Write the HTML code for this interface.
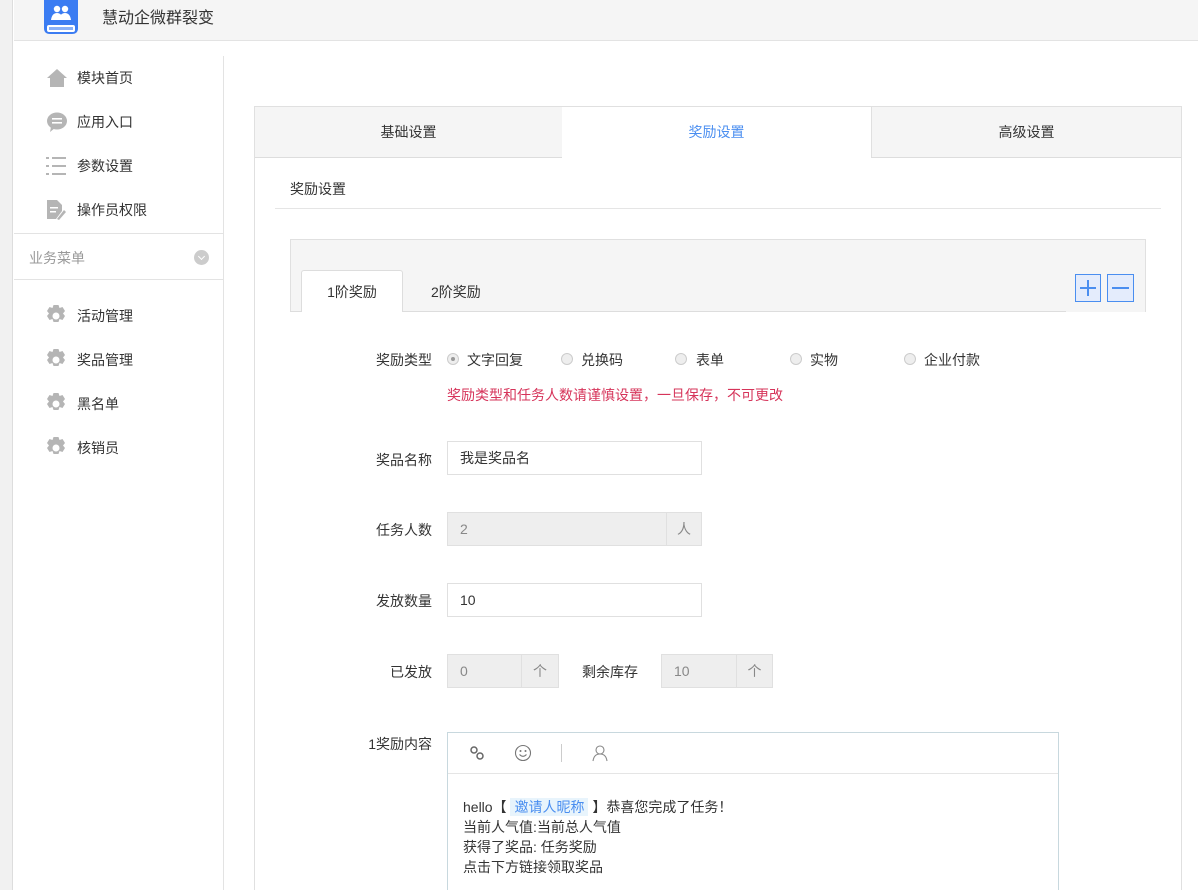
<!DOCTYPE html>
<html><head><meta charset="utf-8">
<style>
*{margin:0;padding:0;box-sizing:border-box}
html,body{width:1198px;height:890px;overflow:hidden}
body{background:#fff;font-family:"Liberation Sans","Noto Sans CJK SC",sans-serif;font-size:14px;color:#333;position:relative}
.a{position:absolute}
.strip{left:0;top:0;width:13px;height:890px;background:#f1f1f1;border-right:1px solid #ddd}
.hdr{left:14px;top:0;width:1184px;height:41px;background:#f5f5f5;border-bottom:1px solid #e3e3e3}
.side{left:14px;top:56px;width:210px;height:834px;border-right:1px solid #e3e3e3}
.mi{position:absolute;left:63px;font-size:14px;color:#333}
.ic{position:absolute;left:32px}
.lbl{position:absolute;width:150px;left:282px;text-align:right;font-size:14px;color:#333}
.inp{position:absolute;height:34px;border:1px solid #e0e0e0;background:#fff;padding-left:12px;line-height:32px;color:#333}
.dis{background:#eee;color:#888}
.add{position:absolute;top:0;right:0;height:32px;border-left:1px solid #e0e0e0;text-align:center;line-height:32px;color:#888}
.rad{position:absolute;top:353px;width:12px;height:12px;border-radius:50%;border:1px solid #ccc;background:#eee}
.rt{position:absolute;top:350px}
</style></head><body>
<div class="a strip"></div>
<div class="a hdr">
  <svg class="a" style="left:30px;top:0" width="34" height="34" viewBox="0 0 34 34"><path d="M0 0H34V28Q34 34 28 34H6Q0 34 0 28Z" fill="#3b7cf2"/><rect x="3" y="25" width="28" height="7" rx="2" fill="#fff"/><rect x="5" y="27" width="24" height="3" fill="#3b7cf2" opacity=".6"/><circle cx="13" cy="9" r="3.2" fill="#fff"/><circle cx="21" cy="9" r="3.2" fill="#fff"/><path d="M7 20Q8 13 13 13Q18 13 19 20ZM15 20Q16 13 21 13Q26 13 27 20Z" fill="#fff"/></svg>
  <div class="a" style="left:88px;top:4px;font-size:16px;color:#333">慧动企微群裂变</div>
</div>
<div class="a side">
  <svg class="ic" style="top:12px" width="22" height="20" viewBox="0 0 22 20"><path d="M11 1L1 10H4V19H18V10H21Z" fill="#b5b5b5"/></svg>
  <div class="mi" style="top:12px">模块首页</div>
  <svg class="ic" style="top:56px" width="22" height="20" viewBox="0 0 22 20"><ellipse cx="11" cy="9" rx="10" ry="8.5" fill="#b5b5b5"/><path d="M5 15L4 20L9 16Z" fill="#b5b5b5"/><rect x="6" y="6" width="10" height="1.6" fill="#fff"/><rect x="6" y="10" width="10" height="1.6" fill="#fff"/></svg>
  <div class="mi" style="top:56px">应用入口</div>
  <svg class="ic" style="top:100px" width="22" height="20" viewBox="0 0 22 20"><g fill="#b5b5b5"><rect x="0" y="1" width="3" height="2"/><rect x="6" y="1" width="14" height="2"/><rect x="0" y="9" width="3" height="2"/><rect x="6" y="9" width="14" height="2"/><rect x="0" y="17" width="3" height="2"/><rect x="6" y="17" width="14" height="2"/></g></svg>
  <div class="mi" style="top:100px">参数设置</div>
  <svg class="ic" style="top:143px" width="22" height="22" viewBox="0 0 22 22"><path d="M1 1H11L16 6V12L10 20H1Z" fill="#b5b5b5"/><rect x="4" y="8" width="8" height="1.5" fill="#fff"/><rect x="4" y="12" width="6" height="1.5" fill="#fff"/><path d="M11 20L18 11L20 13L13 21Z" fill="#b5b5b5"/></svg>
  <div class="mi" style="top:144px">操作员权限</div>
  <div class="a" style="left:0;top:177px;width:210px;height:47px;border-top:1px solid #e3e3e3;border-bottom:1px solid #e3e3e3"></div>
  <div class="a" style="left:15px;top:192px;color:#999">业务菜单</div>
  <div class="a" style="left:180px;top:194px;width:15px;height:15px;border-radius:50%;background:#ccc"></div>
  <div class="a" style="left:185px;top:198px;width:5px;height:5px;border-right:1px solid #fff;border-bottom:1px solid #fff;transform:rotate(45deg)"></div>
  <svg class="ic" style="top:249px;left:31px" width="22" height="22" viewBox="0 0 22 22"><path fill="#b5b5b5" d="M8.5 0h5l1 3 3-1 2.5 4-2 2.5 2 2.5-2.5 4-3-1-1 3h-5l-1-3-3 1-2.5-4 2-2.5-2-2.5 2.5-4 3 1z"/><circle cx="11" cy="11" r="3.5" fill="#fff"/></svg>
  <div class="mi" style="top:250px">活动管理</div>
  <svg class="ic" style="top:293px;left:31px" width="22" height="22" viewBox="0 0 22 22"><path fill="#b5b5b5" d="M8.5 0h5l1 3 3-1 2.5 4-2 2.5 2 2.5-2.5 4-3-1-1 3h-5l-1-3-3 1-2.5-4 2-2.5-2-2.5 2.5-4 3 1z"/><circle cx="11" cy="11" r="3.5" fill="#fff"/></svg>
  <div class="mi" style="top:294px">奖品管理</div>
  <svg class="ic" style="top:337px;left:31px" width="22" height="22" viewBox="0 0 22 22"><path fill="#b5b5b5" d="M8.5 0h5l1 3 3-1 2.5 4-2 2.5 2 2.5-2.5 4-3-1-1 3h-5l-1-3-3 1-2.5-4 2-2.5-2-2.5 2.5-4 3 1z"/><circle cx="11" cy="11" r="3.5" fill="#fff"/></svg>
  <div class="mi" style="top:338px">黑名单</div>
  <svg class="ic" style="top:381px;left:31px" width="22" height="22" viewBox="0 0 22 22"><path fill="#b5b5b5" d="M8.5 0h5l1 3 3-1 2.5 4-2 2.5 2 2.5-2.5 4-3-1-1 3h-5l-1-3-3 1-2.5-4 2-2.5-2-2.5 2.5-4 3 1z"/><circle cx="11" cy="11" r="3.5" fill="#fff"/></svg>
  <div class="mi" style="top:382px">核销员</div>
</div>

<div class="a" style="left:254px;top:106px;width:928px;height:800px;border:1px solid #e0e0e0"></div>
<div class="a" style="left:255px;top:107px;width:307px;height:51px;background:#f5f5f5;border-bottom:1px solid #ddd;text-align:center;line-height:50px">基础设置</div>
<div class="a" style="left:562px;top:107px;width:309px;height:51px;background:#fff;text-align:center;line-height:50px;color:#4a8ef0">奖励设置</div>
<div class="a" style="left:871px;top:107px;width:310px;height:51px;background:#f5f5f5;border-bottom:1px solid #ddd;border-left:1px solid #e0e0e0;text-align:center;line-height:50px">高级设置</div>
<div class="a" style="left:290px;top:179px">奖励设置</div>
<div class="a" style="left:275px;top:208px;width:886px;height:1px;background:#e5e5e5"></div>

<div class="a" style="left:290px;top:239px;width:856px;height:73px;background:#f5f5f5;border:1px solid #e0e0e0;border-bottom:none"></div>
<div class="a" style="left:290px;top:311px;width:776px;height:1px;background:#ddd"></div>
<div class="a" style="left:301px;top:270px;width:102px;height:42px;background:#fff;border:1px solid #ddd;border-bottom:none;border-radius:3px 3px 0 0;text-align:center;line-height:42px">1阶奖励</div>
<div class="a" style="left:431px;top:282px">2阶奖励</div>
<div class="a" style="left:1075px;top:274px;width:26px;height:28px;border:1px solid #4a8ef0;background:#e4ecfc"></div>
<div class="a" style="left:1080px;top:287px;width:16px;height:2px;background:#4a8ef0"></div>
<div class="a" style="left:1087px;top:280px;width:2px;height:16px;background:#4a8ef0"></div>
<div class="a" style="left:1107px;top:274px;width:27px;height:28px;border:1px solid #4a8ef0;background:#e4ecfc"></div>
<div class="a" style="left:1112px;top:287px;width:17px;height:2px;background:#4a8ef0"></div>

<div class="lbl" style="top:350px">奖励类型</div>
<div class="rad" style="left:447px"></div><div class="a" style="left:451px;top:357px;width:4px;height:4px;border-radius:50%;background:#999"></div>
<div class="rt" style="left:467px">文字回复</div>
<div class="rad" style="left:561px"></div><div class="rt" style="left:581px">兑换码</div>
<div class="rad" style="left:675px"></div><div class="rt" style="left:696px">表单</div>
<div class="rad" style="left:790px"></div><div class="rt" style="left:810px">实物</div>
<div class="rad" style="left:904px"></div><div class="rt" style="left:924px">企业付款</div>
<div class="a" style="left:447px;top:385px;color:#d6345a">奖励类型和任务人数请谨慎设置，一旦保存，不可更改</div>

<div class="lbl" style="top:450px">奖品名称</div>
<div class="inp" style="left:447px;top:441px;width:255px">我是奖品名</div>
<div class="lbl" style="top:520px">任务人数</div>
<div class="inp dis" style="left:447px;top:512px;width:255px">2<div class="add" style="width:35px">人</div></div>
<div class="lbl" style="top:591px">发放数量</div>
<div class="inp" style="left:447px;top:583px;width:255px">10</div>
<div class="lbl" style="top:662px">已发放</div>
<div class="inp dis" style="left:447px;top:654px;width:112px">0<div class="add" style="width:37px">个</div></div>
<div class="a" style="left:582px;top:662px">剩余库存</div>
<div class="inp dis" style="left:661px;top:654px;width:112px">10<div class="add" style="width:36px">个</div></div>

<div class="lbl" style="top:734px">1奖励内容</div>
<div class="a" style="left:447px;top:732px;width:612px;height:180px;border:1px solid #c8d8de"></div>
<div class="a" style="left:448px;top:773px;width:610px;height:1px;background:#e5e5e5"></div>
<svg class="a" style="left:469px;top:745px" width="16" height="16" viewBox="0 0 16 16"><g fill="none" stroke="#666" stroke-width="1.5"><circle cx="5" cy="5" r="3"/><circle cx="11" cy="11" r="3"/></g></svg>
<svg class="a" style="left:514px;top:744px" width="18" height="18" viewBox="0 0 18 18"><g fill="none" stroke="#777" stroke-width="1.1"><circle cx="9" cy="9" r="7.5"/><path d="M5.5 10.5Q9 14 12.5 10.5"/></g><circle cx="6.5" cy="7" r="1" fill="#777"/><circle cx="11.5" cy="7" r="1" fill="#777"/></svg>
<div class="a" style="left:561px;top:744px;width:1px;height:18px;background:#ccc"></div>
<svg class="a" style="left:591px;top:744px" width="18" height="18" viewBox="0 0 18 18"><g fill="none" stroke="#888" stroke-width="1.1"><circle cx="9" cy="6" r="4"/><path d="M2 17Q3 10 9 10Q15 10 16 17"/></g></svg>
<div class="a" style="left:463px;top:797px;line-height:20px">hello【 <span style="background:#e8f4fc;color:#4a8ef0;padding:1px 4px">邀请人昵称</span> 】恭喜您完成了任务！<br>当前人气值:当前总人气值<br>获得了奖品: 任务奖励<br>点击下方链接领取奖品</div>
</body></html>
